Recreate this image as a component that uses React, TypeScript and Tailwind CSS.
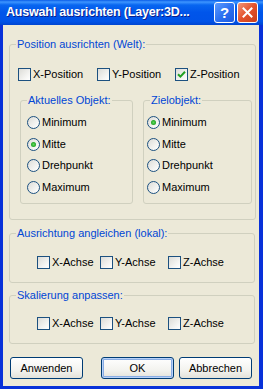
import React from "react";

const FONT = "font-['Liberation_Sans',Arial,sans-serif]";

function Check({ label, checked = false, w }: { label: string; checked?: boolean; w: string }) {
  return (
    <div className={`flex items-center h-[13px] ${w}`}>
      <div className="w-[13px] h-[13px] shrink-0 border border-[#1C5180] bg-[linear-gradient(135deg,#DCDCD7_0%,#F6F6F4_70%,#FFFFFF_100%)] flex items-center justify-center">
        {checked && (
          <svg width="9" height="9" viewBox="0 0 9 9">
            <path d="M1 4.2 L3.4 6.6 L8 1.8" fill="none" stroke="#21A121" strokeWidth="2" />
          </svg>
        )}
      </div>
      <span className="ml-[2px] leading-[13px]">{label}</span>
    </div>
  );
}

function Radio({ label, checked = false }: { label: string; checked?: boolean }) {
  return (
    <div className="flex items-center h-[13px]">
      <div className="w-[13px] h-[13px] shrink-0 rounded-full border border-[#1C5180] bg-[linear-gradient(135deg,#DCDCD7_0%,#F6F6F4_70%,#FFFFFF_100%)] flex items-center justify-center">
        {checked && (
          <div className="w-[5px] h-[5px] rounded-full bg-[radial-gradient(circle,#5DDB5D_0%,#21A121_70%)]" />
        )}
      </div>
      <span className="ml-[2px] leading-[13px]">{label}</span>
    </div>
  );
}

function Group({ title, className, children }: { title: string; className: string; children: React.ReactNode }) {
  return (
    <fieldset className={`border border-[#D0D0BF] rounded-[3px] ${className}`}>
      <legend className="ml-[6px] px-[1px] leading-[13px] text-[#0046D5]">{title}</legend>
      {children}
    </fieldset>
  );
}

function XpButton({ label, def = false }: { label: string; def?: boolean }) {
  return (
    <button
      className={`w-[73px] h-[22px] rounded-[3px] border border-[#003C74] bg-[linear-gradient(180deg,#FFFFFF_0%,#F3F3EF_60%,#E3E2DA_100%)] text-black leading-none ${
        def ? "shadow-[inset_0_0_0_1px_#B8D2F9,inset_0_0_0_2px_#89ADE4]" : ""
      }`}
    >
      {label}
    </button>
  );
}

export default function App() {
  return (
    <div className={`w-[263px] h-[389px] flex flex-col bg-[#0831D9] text-[11px] text-black ${FONT}`}>
      {/* Title bar */}
      <div className="h-[25px] shrink-0 flex items-center pl-[6px] pr-[5px] bg-[linear-gradient(180deg,#0A5DE8_0%,#3D95FF_8%,#0866F0_20%,#0055EA_50%,#0053E8_85%,#0045D0_100%)]">
        <span className="flex-1 text-white font-bold text-[12.5px] tracking-[-0.2px] [text-shadow:1px_1px_0_#0A1E8C] whitespace-nowrap overflow-hidden">
          Auswahl ausrichten (Layer:3D...
        </span>
        <div className="flex gap-[2px]">
          <div className="w-[21px] h-[21px] rounded-[3px] border border-white bg-[linear-gradient(135deg,#5C9BFF_0%,#2A6FF0_55%,#1D5AE0_100%)] flex items-center justify-center text-white font-bold text-[15px] leading-none">
            ?
          </div>
          <div className="w-[21px] h-[21px] rounded-[3px] border border-white bg-[linear-gradient(135deg,#F29678_0%,#E4522C_50%,#C8401C_100%)] flex items-center justify-center">
            <svg width="11" height="11" viewBox="0 0 11 11">
              <path d="M1.5 1.5 L9.5 9.5 M9.5 1.5 L1.5 9.5" stroke="white" strokeWidth="2" strokeLinecap="square" />
            </svg>
          </div>
        </div>
      </div>

      {/* Body */}
      <div className="flex-1 mx-[3px] mr-[4px] mb-[3px] bg-[#ECE9D8] pl-[6px] pr-[4px] pt-[13px] flex flex-col">
        <Group title="Position ausrichten (Welt):" className="h-[182px] shrink-0">
          <div className="flex pl-[8px] mt-[17px]">
            <Check label="X-Position" w="w-[79px]" />
            <Check label="Y-Position" w="w-[78px]" />
            <Check label="Z-Position" checked w="w-[80px]" />
          </div>
          <div className="flex gap-[10px] ml-[10px] mt-[13px]">
            <Group title="Aktuelles Objekt:" className="w-[113px] h-[110px]">
              <div className="flex flex-col gap-[8.5px] pl-[6px] mt-[9px]">
                <Radio label="Minimum" />
                <Radio label="Mitte" checked />
                <Radio label="Drehpunkt" />
                <Radio label="Maximum" />
              </div>
            </Group>
            <Group title="Zielobjekt:" className="w-[109px] h-[110px]">
              <div className="flex flex-col gap-[8.5px] pl-[3px] mt-[9px]">
                <Radio label="Minimum" checked />
                <Radio label="Mitte" />
                <Radio label="Drehpunkt" />
                <Radio label="Maximum" />
              </div>
            </Group>
          </div>
        </Group>

        <Group title="Ausrichtung angleichen (lokal):" className="h-[56px] mt-[7px] shrink-0">
          <div className="flex pl-[27px] mt-[16px]">
            <Check label="X-Achse" w="w-[63px]" />
            <Check label="Y-Achse" w="w-[68px]" />
            <Check label="Z-Achse" w="w-[70px]" />
          </div>
        </Group>

        <Group title="Skalierung anpassen:" className="h-[55px] mt-[6px] shrink-0">
          <div className="flex pl-[27px] mt-[15px]">
            <Check label="X-Achse" w="w-[63px]" />
            <Check label="Y-Achse" w="w-[68px]" />
            <Check label="Z-Achse" w="w-[70px]" />
          </div>
        </Group>

        <div className="flex mt-[13px] pl-[1px]">
          <XpButton label="Anwenden" />
          <div className="ml-[18px]">
            <XpButton label="OK" def />
          </div>
          <div className="ml-[5px]">
            <XpButton label="Abbrechen" />
          </div>
        </div>
      </div>
    </div>
  );
}
